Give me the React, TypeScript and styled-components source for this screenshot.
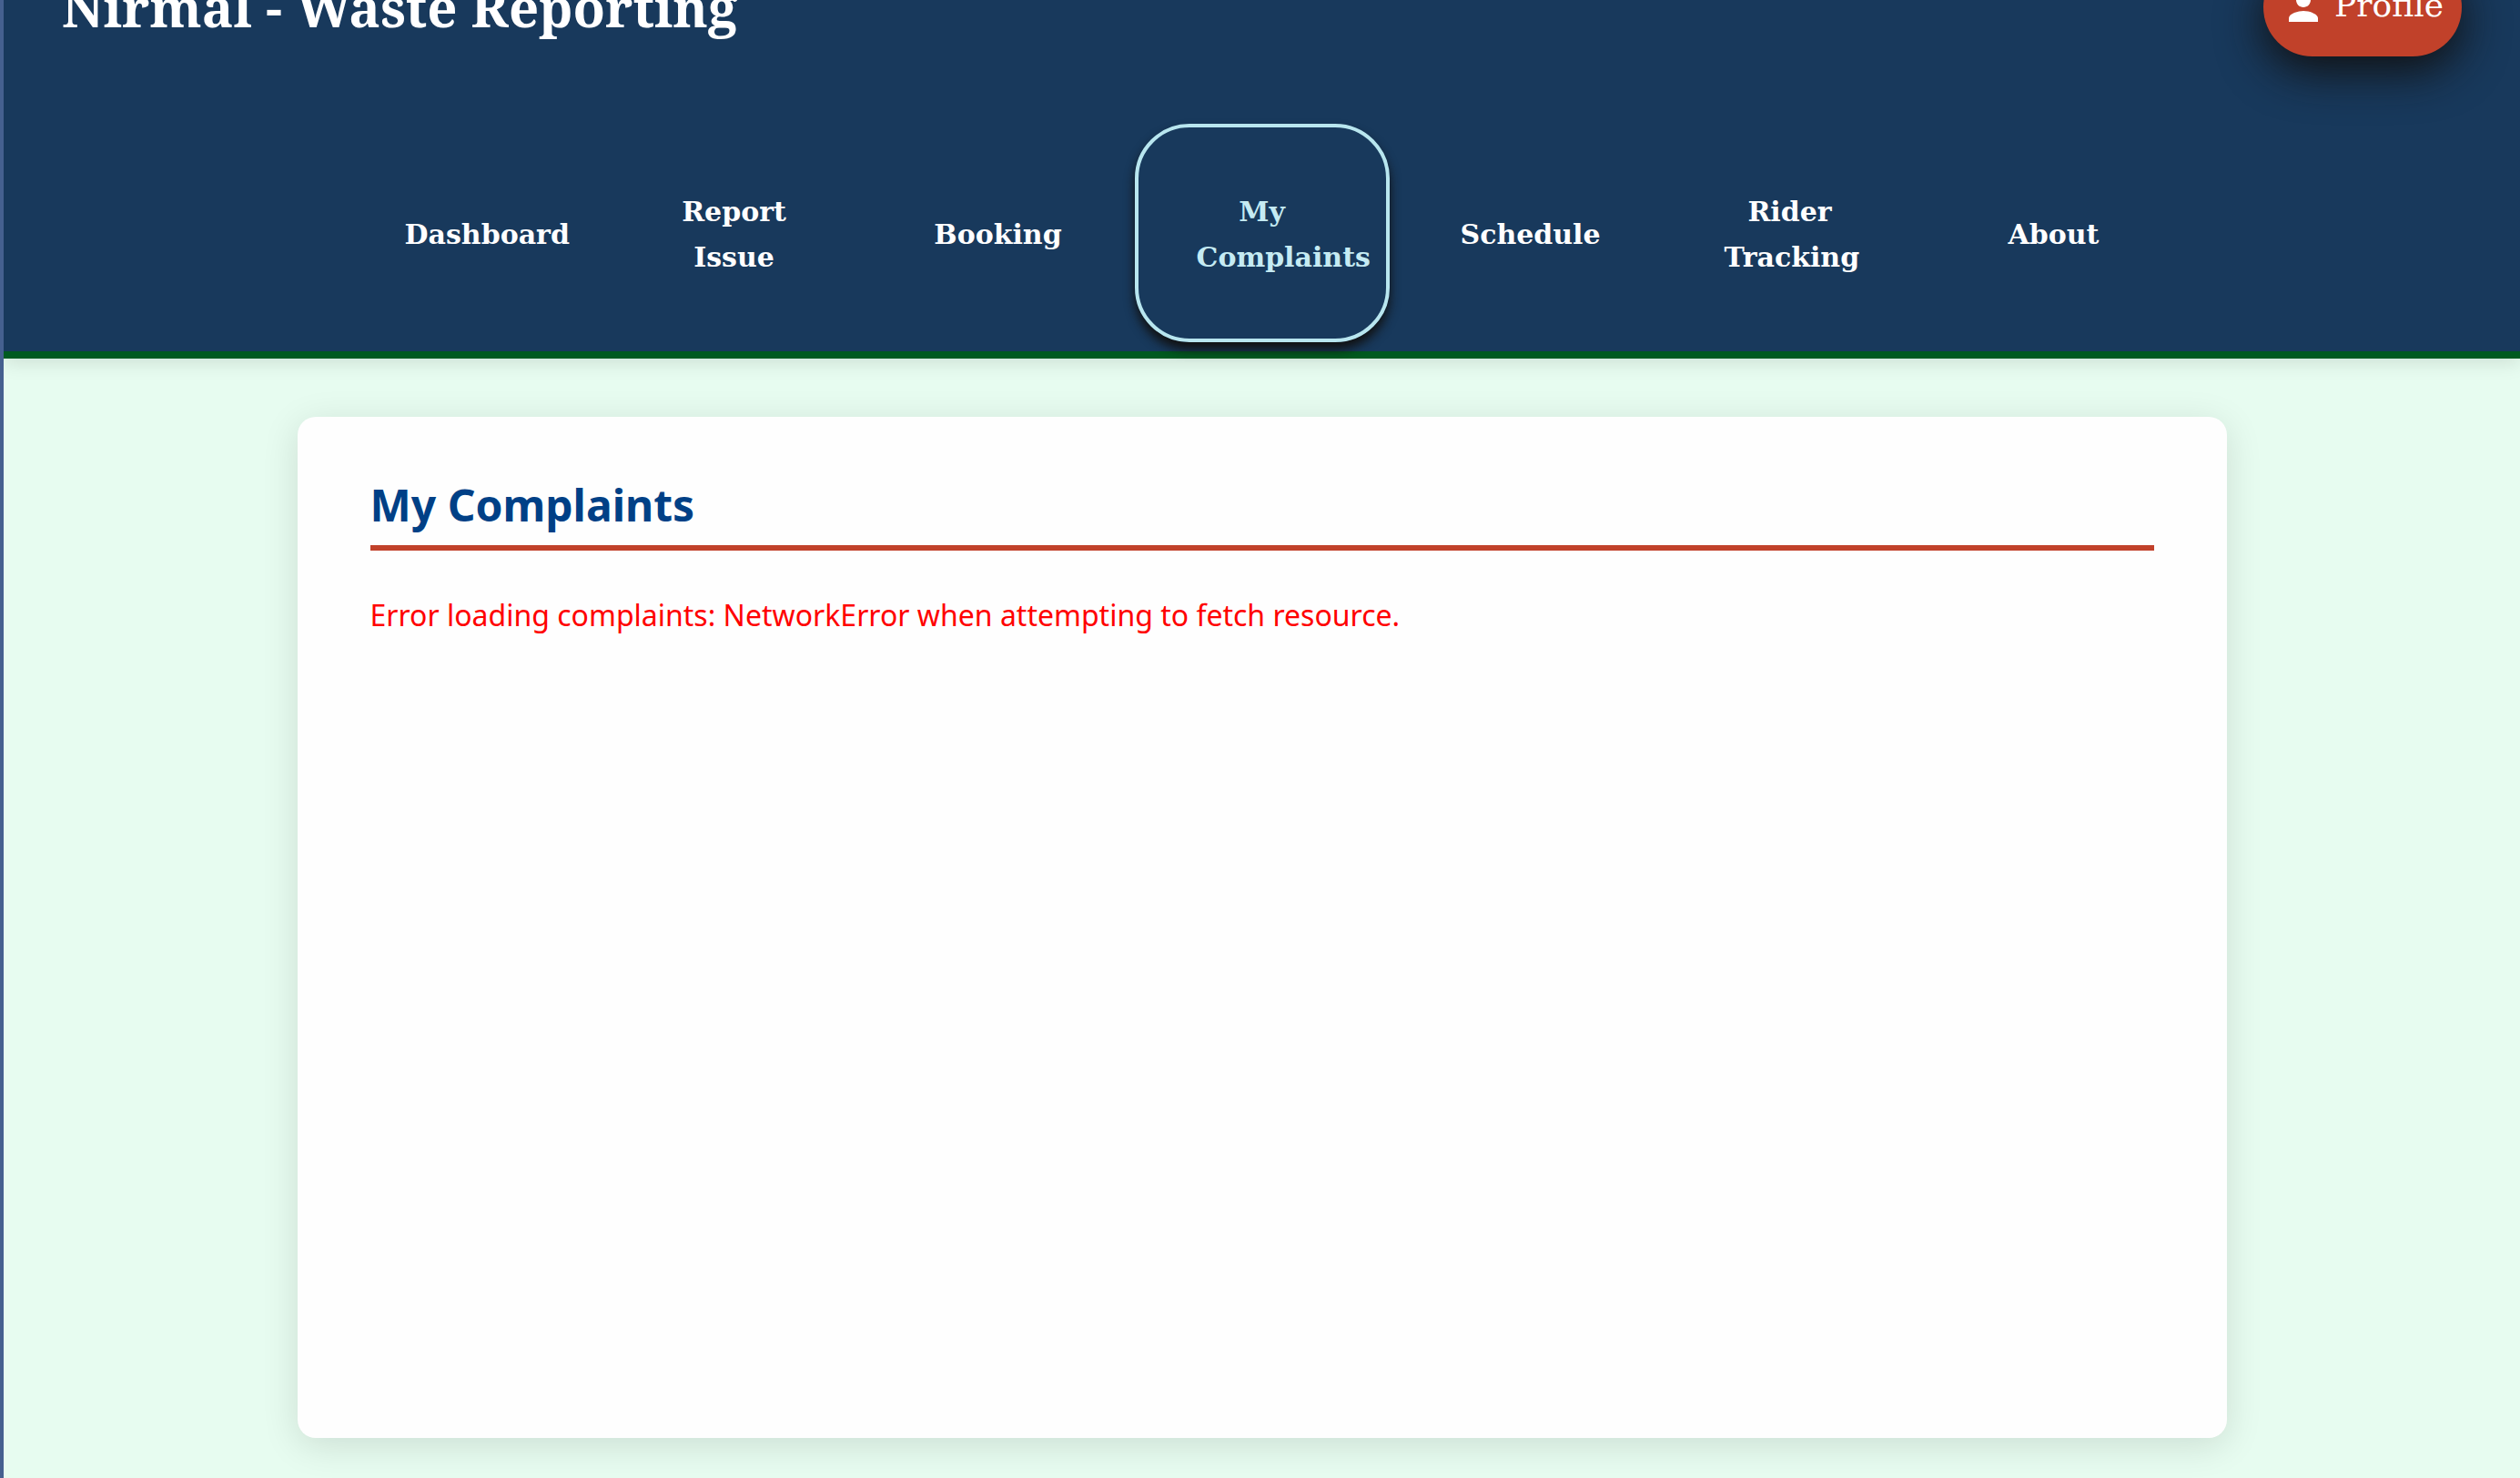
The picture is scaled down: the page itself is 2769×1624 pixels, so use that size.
import React from "react";
import styled, { createGlobalStyle } from "styled-components";
import { MdPerson } from "react-icons/md";

const GlobalStyle = createGlobalStyle`
  *, *::before, *::after { box-sizing: border-box; }
  body {
    margin: 0;
    background: #e7fcf0;
    font-family: "Noto Sans", sans-serif;
    font-size: 32px;
    line-height: 50px;
  }
`;

const Page = styled.div`
  display: flex;
  flex-direction: column;
  min-height: 100vh;
  overflow: hidden;
  border-left: 4px solid #45608f;
`;

const Header = styled.header`
  margin-top: -70px;
  padding: 24px 0 10px;
  background: #18395c;
  border-bottom: 8px solid #005a20;
  box-shadow: 0 4px 20px rgba(0, 0, 0, 0.12);
`;

const TopRow = styled.div`
  display: flex;
  align-items: center;
  justify-content: space-between;
  padding: 0 64px;
`;

const Brand = styled.h1`
  margin: 0;
  color: #fff;
  font: 700 58px/80px "Noto Serif", "DejaVu Serif", serif;
`;

const ProfileButton = styled.button`
  display: flex;
  align-items: center;
  gap: 10px;
  padding: 30px 20px;
  border: 0;
  border-radius: 54px;
  background: #c1412a;
  color: #fff;
  font: 400 36px/44px "DejaVu Serif", serif;
  box-shadow: 0 16px 50px #111;
  cursor: pointer;
`;

const ProfileLabel = styled.span`
  padding-bottom: 4px;
`;

const NavList = styled.ul`
  display: grid;
  grid-template-columns: repeat(7, minmax(0, 1fr));
  gap: 10px;
  max-width: 2020px;
  margin: 74px auto 0;
  padding: 0;
  list-style: none;
`;

const NavLink = styled.a<{ $active: boolean }>`
  display: grid;
  grid-template-columns: minmax(0, 1fr);
  align-content: center;
  height: 100%;
  padding: 68px 64px 64px;
  border: 4px solid ${(p) => (p.$active ? "#b8e6ef" : "transparent")};
  border-radius: 60px;
  color: ${(p) => (p.$active ? "#c5ebf3" : "#fff")};
  font: 700 30px/50px "DejaVu Serif", serif;
  text-align: center;
  text-decoration: none;
  box-shadow: ${(p) => (p.$active ? "0 8px 12px #111" : "none")};
`;

const Main = styled.main`
  display: flex;
  flex: 1;
  justify-content: center;
  padding: 64px 0 44px;
`;

const Card = styled.section`
  width: 100%;
  max-width: 2120px;
  padding: 64px 80px;
  border-radius: 20px;
  background: #fefefe;
  box-shadow: 0 8px 40px rgba(0, 0, 0, 0.12);
`;

const CardTitle = styled.h2`
  margin: 0 0 46px;
  padding-bottom: 11px;
  border-bottom: 6px solid #c1412a;
  color: #004086;
  font-size: 48px;
  line-height: 66px;
`;

const ErrorText = styled.p`
  margin: 0;
  color: #f00;
`;

const links = [
  "Dashboard",
  "Report Issue",
  "Booking",
  "My Complaints",
  "Schedule",
  "Rider Tracking",
  "About",
];

export default function App() {
  const current = "My Complaints";
  return (
    <Page>
      <GlobalStyle />
      <Header>
        <TopRow>
          <Brand>Nirmal - Waste Reporting</Brand>
          <ProfileButton type="button">
            <MdPerson size={48} aria-hidden />
            <ProfileLabel>Profile</ProfileLabel>
          </ProfileButton>
        </TopRow>
        <nav>
          <NavList>
            {links.map((label) => (
              <li key={label}>
                <NavLink href="#" $active={label === current} aria-current={label === current ? "page" : undefined}>
                  <span>{label}</span>
                </NavLink>
              </li>
            ))}
          </NavList>
        </nav>
      </Header>
      <Main>
        <Card>
          <CardTitle>My Complaints</CardTitle>
          <ErrorText role="alert">
            Error loading complaints: NetworkError when attempting to fetch resource.
          </ErrorText>
        </Card>
      </Main>
    </Page>
  );
}
